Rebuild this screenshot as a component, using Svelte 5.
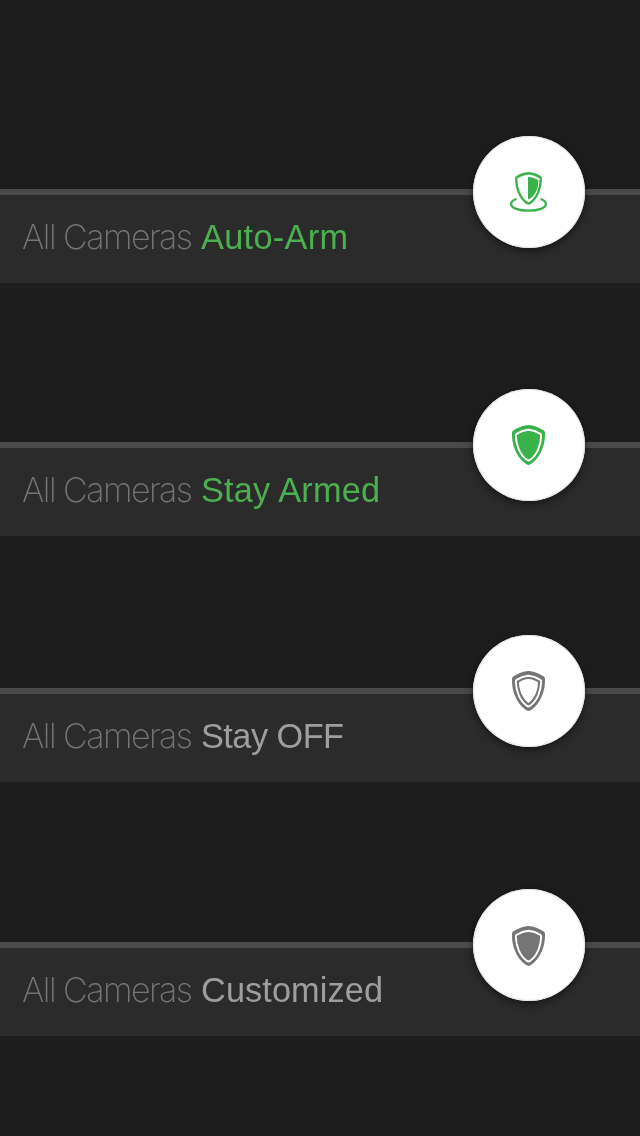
<script lang="ts">
  type Mode = {
    name: string;
    icon: 'auto' | 'solid' | 'outline';
    on: boolean;
    gap: number;
    width: number;
    shift: number;
  };

  // gap is the space above each bar
  const modes: Mode[] = [
    { name: 'Auto-Arm', icon: 'auto', on: true, gap: 189, width: 147, shift: 0 },
    { name: 'Stay Armed', icon: 'solid', on: true, gap: 159, width: 179, shift: 0 },
    { name: 'Stay OFF', icon: 'outline', on: false, gap: 152, width: 143, shift: 0 },
    { name: 'Customized', icon: 'solid', on: false, gap: 160, width: 182, shift: 1 },
  ];

  const outer = 'M55.5 36C60.5 36.4 66.5 38.6 70.8 41.6Q72 42.4 72 44C72.4 55.5 68 67.8 58.3 74.8Q55.5 77 52.7 74.8C43 67.8 38.6 55.5 39 44Q39 42.4 40.2 41.6C44.5 38.6 50.5 36.4 55.5 36Z';
  const ring = 'M55.5 40.8C59.5 41.1 63.8 42.6 67.4 44.9Q68.2 45.4 68.2 46.6C68 56 64.2 65.8 57.2 70.8Q55.5 72.2 53.8 70.8C46.8 65.8 43 56 42.8 46.6Q42.8 45.4 43.6 44.9C47.2 42.6 51.5 41.1 55.5 40.8Z';
</script>

<main>
  {#each modes as mode}
    <section class="bar" class:on={mode.on} style="margin-top: {mode.gap}px">
      <!-- svg text keeps each label at a fixed width -->
      <svg class="label" width="420" height="88">
        <text class="scope" x="22" y="54" textLength="171">All Cameras</text>
        <text class="state" x="201" y="54" textLength={mode.width}>{mode.name}</text>
      </svg>
      <button class="toggle" aria-label={mode.name}>
        <svg viewBox="0 0 112 112" width="112" height="112">
          {#if mode.icon === 'auto'}
            <path class="line" stroke-width="2.4" d="M55.5 37.2C59.5 37.5 64 39.1 67.2 41.3Q67.8 41.7 67.8 42.7C67.8 52 64.3 61.8 57.3 66.7Q55.5 68.1 53.7 66.7C46.7 61.8 43.2 52 43.2 42.7Q43.2 41.7 43.8 41.3C47 39.1 51.5 37.5 55.5 37.2Z" />
            <path class="fill" d="M55 40.7C59 41 62.4 42.4 65.4 44.2C65.6 52.5 62 60.3 55 63.6Z" />
            <path class="line" stroke-width="2.3" d="M42.6 63.2C39.6 64.4 38.1 66 38.1 68C38.1 72 45.6 74.7 55.5 74.7S72.9 72 72.9 68C72.9 66 71.4 64.4 68.4 63.2" />
          {:else}
            <g transform="translate(0 {mode.shift})">
              <path class="fill" d={outer} />
              <path class="gap" d={ring} />
              {#if mode.icon === 'outline'}
                <path class="hole" d="M55.5 44C59 44.2 62.2 45.4 65 47.2C65 55 61.5 63.5 55.5 68C49.5 63.5 46 55 46 47.2C48.8 45.4 52 44.2 55.5 44Z" />
              {/if}
            </g>
          {/if}
        </svg>
      </button>
    </section>
  {/each}
</main>

<style>
  :global(body) {
    margin: 0;
    background: #1d1d1d;
  }

  main {
    display: flex;
    flex-direction: column;
    height: 1136px;
    background: #1d1d1d;
  }

  .bar {
    display: flex;
    justify-content: space-between;
    box-sizing: border-box;
    height: 94px;
    flex: none;
    padding-right: 55px;
    border-top: 6px solid #4a4a4a;
    background: #2b2b2b;
    color: #757575;
  }

  .on {
    color: #39b24a;
  }

  .label {
    display: block;
    will-change: transform;
  }

  .scope {
    font: 200 34px Inter, sans-serif;
    fill: #757575;
  }

  .state {
    font: 34.3px "Liberation Sans", Arial, sans-serif;
    fill: #9e9e9e;
  }

  .on .state {
    fill: #4caf50;
  }

  .toggle {
    width: 112px;
    height: 112px;
    margin: -59px 0 0;
    padding: 0;
    border: 0;
    border-radius: 50%;
    background: #fff;
    color: inherit;
    box-shadow: 0 3px 9px rgba(0, 0, 0, 0.5), inset 0 0 1px 1px #e2e2e2;
  }

  .toggle svg {
    display: block;
  }

  .fill {
    fill: currentColor;
  }

  .line {
    fill: none;
    stroke: currentColor;
    stroke-linecap: round;
    stroke-linejoin: round;
  }

  .gap {
    fill: none;
    stroke: #fff;
    stroke-width: 1.9;
  }

  .hole {
    fill: #fff;
  }
</style>
